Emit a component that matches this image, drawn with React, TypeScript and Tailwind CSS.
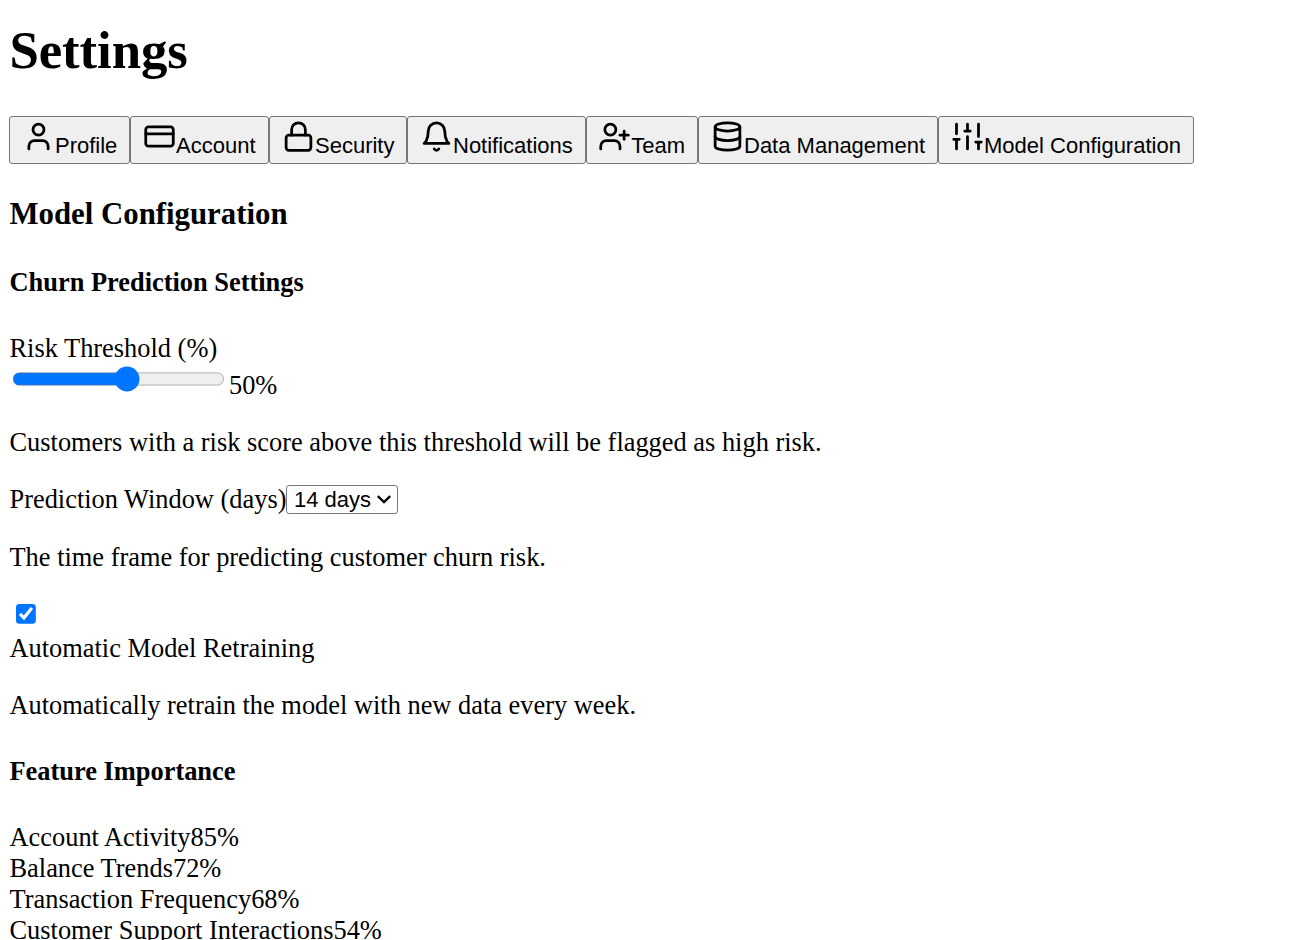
import { User, CreditCard, Lock, UserPlus, Database } from "lucide-react";

function Bell({ className }: { className: string }) {
  return (
    <svg viewBox="0 0 24 24" className={`${className} fill-none stroke-current stroke-2`} strokeLinecap="round" strokeLinejoin="round">
      <path d="M6 8a6 6 0 0 1 12 0c0 7 3 9 3 9H3s3-2 3-9" />
      <path d="M10.3 21a1.94 1.94 0 0 0 3.4 0" />
    </svg>
  );
}

function Sliders({ className }: { className: string }) {
  return (
    <svg viewBox="0 0 24 24" className={`${className} fill-none stroke-current stroke-2`} strokeLinecap="round" strokeLinejoin="round">
      <path d="M4 21v-7M4 10V3M12 21v-9M12 8V3M20 21v-5M20 12V3M2 14h4M10 8h4M18 16h4" />
    </svg>
  );
}

const tabs = [
  { label: "Profile", Icon: User, box: "w-[121px] pl-[12px]" },
  { label: "Account", Icon: CreditCard, box: "w-[139px] pl-[12px]" },
  { label: "Security", Icon: Lock, box: "w-[138px] pl-[12px]" },
  { label: "Notifications", Icon: Bell, box: "w-[179px] pl-[12px]" },
  { label: "Team", Icon: UserPlus, box: "w-[112px] pl-[11.3px]" },
  { label: "Data Management", Icon: Database, box: "w-[240px] pl-[12px]" },
  { label: "Model Configuration", Icon: Sliders, box: "w-[256px] pl-[12px]" },
];

const features = [
  ["Account Activity", "85%"],
  ["Balance Trends", "72%"],
  ["Transaction Frequency", "68%"],
  ["Customer Support Interactions", "54%"],
];

export default function App() {
  return (
    <main className="h-[940px] overflow-hidden bg-white pl-[9.5px] font-['Liberation_Serif',serif] text-[26.4px] leading-[31px] text-black">
      <h1 className="pt-[20px] text-[52.8px] leading-[60px] font-bold tracking-[-0.1px]">Settings</h1>
      <nav className="mt-[36px] -ml-[0.5px] flex h-12">
        {tabs.map(({ label, Icon, box }) => (
          <button key={label} className={`${box} flex h-12 shrink-0 items-start rounded-[3px] border border-[#767676] bg-[#efefef] font-['Liberation_Sans',sans-serif] text-[22px] leading-[26px] whitespace-nowrap`}>
            <Icon className="mt-[3px] size-[33px] shrink-0" />
            <span className="mt-4">{label}</span>
          </button>
        ))}
      </nav>
      <h2 className="mt-[33px] text-[30.8px] leading-[34px] font-bold">Model Configuration</h2>
      <h3 className="mt-[36px] leading-[31px] font-bold">Churn Prediction Settings</h3>
      <section className="mt-[35px]">
        <label className="block">Risk Threshold (%)</label>
        <div className="flex h-[37px]">
          <input type="range" min={20} max={75} defaultValue={50} className="mt-[1.2px] ml-[1.6px] h-4 w-[129px] shrink-0 [zoom:1.65]" />
          <span className="mt-[6px] ml-[4px]">50%</span>
        </div>
        <p className="mt-[26px]">Customers with a risk score above this threshold will be flagged as high risk.</p>
        <div className="mt-[26px] flex">
          <label>Prediction Window (days)</label>
          <div className="relative mt-[1px] h-[29px] w-[112px]">
            <select defaultValue="14" className="block h-[29px] w-[112px] appearance-none rounded-[3px] border border-[#767676] bg-white pl-[6.5px] font-['Liberation_Sans',sans-serif] text-[22px] leading-[27px]">
              <option value="14">14 days</option>
            </select>
            <svg viewBox="0 0 14 9" className="pointer-events-none absolute top-[10px] right-[7px] h-[9px] w-[14px] fill-none stroke-black stroke-[2.3]"><path d="m.8 1.2 6.2 6 6.2-6" /></svg>
          </div>
        </div>
        <p className="mt-[27px]">The time frame for predicting customer churn risk.</p>
        <div className="h-[60px] pt-[31px] pl-[6px]">
          <input type="checkbox" defaultChecked className="block size-[13px] [zoom:1.65]" />
        </div>
        <label className="block">Automatic Model Retraining</label>
        <p className="mt-[26px]">Automatically retrain the model with new data every week.</p>
      </section>
      <h3 className="mt-[35px] font-bold">Feature Importance</h3>
      <section className="mt-[35px]">
        {features.map(([name, value]) => (
          <div key={name} className="flex"><span>{name}</span><span>{value}</span></div>
        ))}
      </section>
    </main>
  );
}
